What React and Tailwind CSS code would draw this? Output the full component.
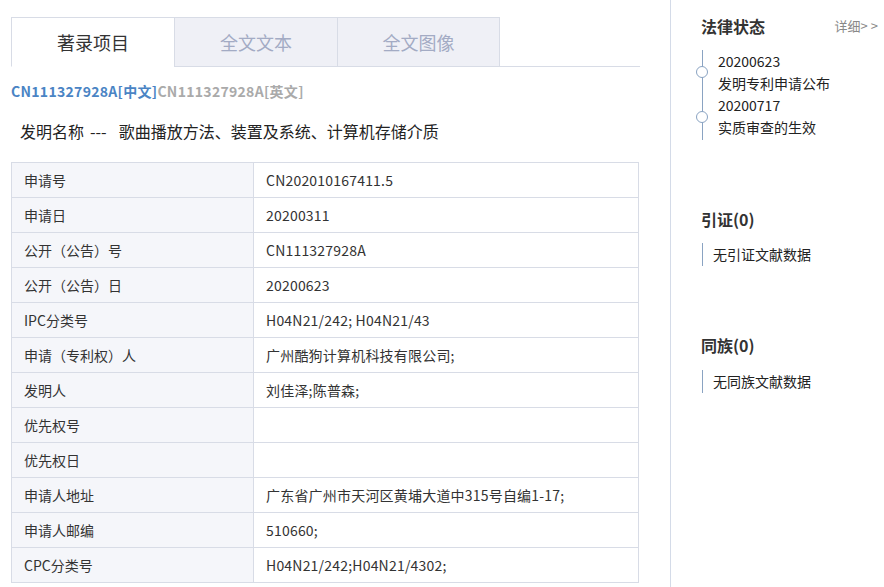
import React from "react";

const rows = [
  ["申请号", "CN202010167411.5"],
  ["申请日", "20200311"],
  ["公开（公告）号", "CN111327928A"],
  ["公开（公告）日", "20200623"],
  ["IPC分类号", "H04N21/242; H04N21/43"],
  ["申请（专利权）人", "广州酷狗计算机科技有限公司;"],
  ["发明人", "刘佳泽;陈普森;"],
  ["优先权号", ""],
  ["优先权日", ""],
  ["申请人地址", "广东省广州市天河区黄埔大道中315号自编1-17;"],
  ["申请人邮编", "510660;"],
  ["CPC分类号", "H04N21/242;H04N21/4302;"],
];

const font = { fontFamily: '"Noto Sans CJK SC", "Noto Sans", sans-serif' };

export default function App() {
  return (
    <div className="flex w-[884px] h-[587px] overflow-hidden bg-white text-[#333]" style={font}>
      <div className="w-[640px] shrink-0 pl-[11px]">
        <div className="mt-[17px] flex h-[50px] border-b border-[#d8dce6]">
          <div className="-mb-px flex h-[50px] w-[163px] items-center justify-center border-l border-t border-[#d8dce6] border-b border-b-white bg-white text-[18px] text-[#333]">
            著录项目
          </div>
          <div className="-mb-px flex h-[50px] w-[163px] items-center justify-center border-l border-t border-b border-[#d8dce6] bg-[#eff0f6] text-[18px] text-[#a3abc4]">
            全文文本
          </div>
          <div className="-mb-px flex h-[50px] w-[163px] items-center justify-center border-l border-r border-t border-b border-[#d8dce6] bg-[#eff0f6] text-[18px] text-[#a3abc4]">
            全文图像
          </div>
        </div>
        <div className="mt-[13px] h-[22px] text-[14px] font-bold leading-[22px] tracking-[0.3px]">
          <span className="text-[#4a84c4]">CN111327928A[中文]</span>
          <span className="text-[#aaaaaa]">CN111327928A[英文]</span>
        </div>
        <div className="mt-[13px] flex h-[32px] items-center pl-[9px] text-[16px] leading-[32px] text-[#222]">
          <span>发明名称</span>
          <span className="ml-[6px]">---</span>
          <span className="ml-[12px]">歌曲播放方法、装置及系统、计算机存储介质</span>
        </div>
        <div className="mt-[15px] w-[628px] border-l border-t border-[#d8dce6]">
          {rows.map(([k, v]) => (
            <div key={k} className="flex h-[35px] border-b border-[#d8dce6] text-[14px]">
              <div className="flex w-[242px] shrink-0 items-center border-r border-[#d8dce6] bg-[#f5f6fa] pl-[12px] text-[#333]">
                {k}
              </div>
              <div className="flex flex-1 items-center border-r border-[#d8dce6] pl-[12px] text-[#333] tracking-[0.2px]">
                {v}
              </div>
            </div>
          ))}
        </div>
      </div>
      <div className="ml-[30px] h-full flex-1 border-l border-[#d4dbe8] pl-[30px] pr-[3px]">
        <div className="mt-[14px] flex h-[24px] items-center justify-between">
          <span className="text-[16px] font-bold text-[#333]">法律状态</span>
          <span className="text-[13px] text-[#888]">
            详细<span className="tracking-[3px]">&gt;&gt;</span>
          </span>
        </div>
        <div className="relative mt-[12px] ml-[1px] h-[90px] border-l-[1.5px] border-[#8aa3c2] pl-[15px] text-[14px] leading-[22px] text-[#222]">
          <span className="absolute left-[-7px] top-[16px] h-[12px] w-[12px] rounded-full border-[1.5px] border-[#8aa3c2] bg-white" />
          <span className="absolute left-[-7px] top-[61px] h-[12px] w-[12px] rounded-full border-[1.5px] border-[#8aa3c2] bg-white" />
          <div className="mt-[1px]">20200623</div>
          <div>发明专利申请公布</div>
          <div>20200717</div>
          <div>实质审查的生效</div>
        </div>
        <div className="mt-[67px] h-[24px] text-[16px] font-bold leading-[24px] text-[#333]">引证(0)</div>
        <div className="mt-[12px] ml-[1px] h-[23px] border-l border-[#8aa3c2] pl-[10px] text-[14px] leading-[23px] text-[#222]">
          无引证文献数据
        </div>
        <div className="mt-[67px] h-[24px] text-[16px] font-bold leading-[24px] text-[#333]">同族(0)</div>
        <div className="mt-[13px] ml-[1px] h-[23px] border-l border-[#8aa3c2] pl-[10px] text-[14px] leading-[23px] text-[#222]">
          无同族文献数据
        </div>
      </div>
    </div>
  );
}
